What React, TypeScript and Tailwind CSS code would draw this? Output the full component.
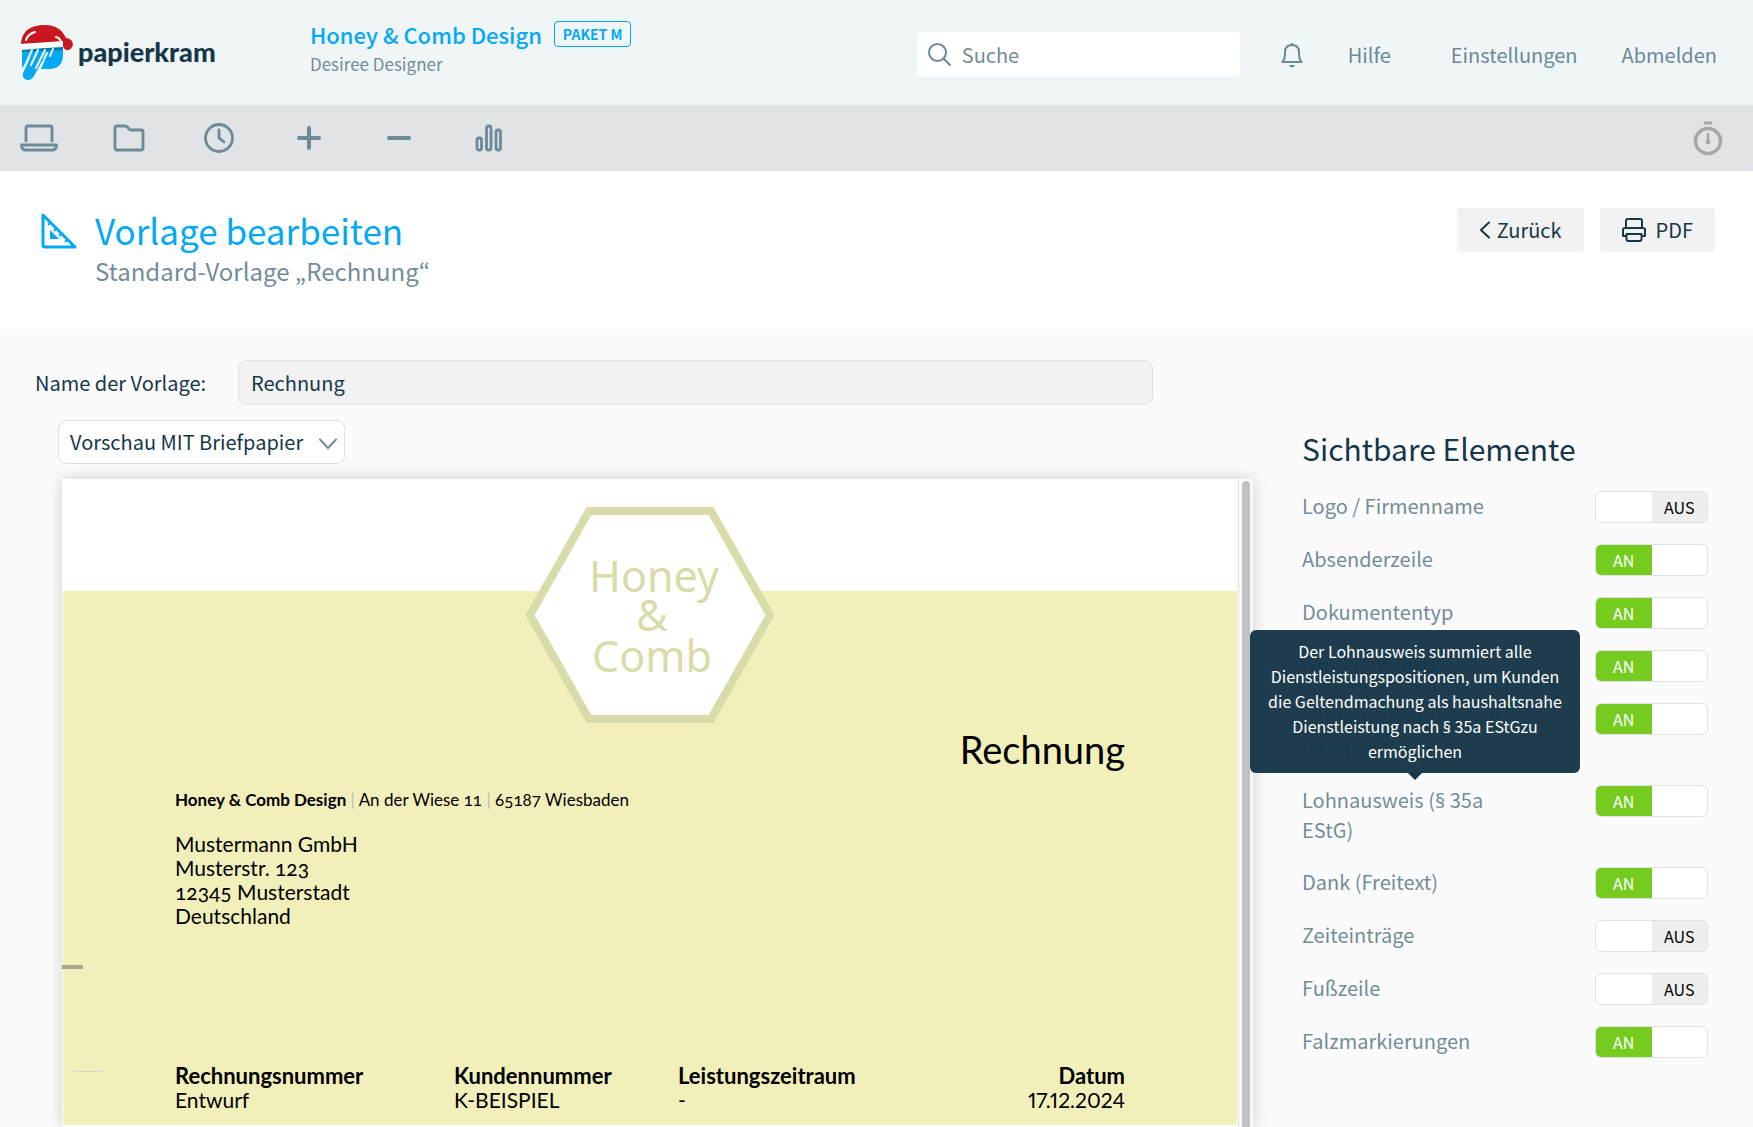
import { useState } from "react";

const NAV_LINKS = ["Hilfe", "Einstellungen", "Abmelden"];

interface VisibleElement {
  id: string;
  label: string;
  on: boolean;
  tooltip?: string;
}

const ELEMENTS: VisibleElement[] = [
  { id: "logo", label: "Logo / Firmenname", on: false },
  { id: "sender", label: "Absenderzeile", on: true },
  { id: "doctype", label: "Dokumententyp", on: true },
  { id: "greeting", label: "Gruß (Freitext)", on: true },
  { id: "terms", label: "Zahlungskonditionen (Freitext)", on: true },
  {
    id: "wage",
    label: "Lohnausweis (§ 35a EStG)",
    on: true,
    tooltip:
      "Der Lohnausweis summiert alle Dienstleistungspositionen, um Kunden die Geltendmachung als haushaltsnahe Dienstleistung nach § 35a EStGzu ermöglichen",
  },
  { id: "thanks", label: "Dank (Freitext)", on: true },
  { id: "times", label: "Zeiteinträge", on: false },
  { id: "footer", label: "Fußzeile", on: false },
  { id: "folds", label: "Falzmarkierungen", on: true },
];

// the CJK family draws "§" full width, so it is set in Noto Sans
function Text({ children }: { children: string }) {
  return children.split("§").map((part, i) => (
    <span key={i}>
      {i > 0 && <span className="font-['Noto_Sans',sans-serif] leading-none">§</span>}
      {part}
    </span>
  ));
}

function Logo() {
  return (
    <a href="#" aria-label="papierkram" className="flex items-center gap-1">
      <svg width="54" height="58" viewBox="0 0 54 58" fill="none">
        <path d="M2 24H43V31Q43 46 29 46H21L25 37Q22 37 21 40L14 53Q10 59 5 56Q1 53 4 48L11 33L2 45Z" fill="#03a9f4" />
        <path d="M2 25L43 23V27L2 29Z" fill="#0279ad" />
        <path
          d="M12 27L4 45M18 27L11 42M25 27L19 39L16 45M27 30L24 36M33 26L30 33"
          stroke="#f0f5f8"
          strokeWidth="2"
          strokeLinecap="round"
        />
        <path d="M1 21Q2 2 25 2Q40 2 46 15Q53 16 53 22Q51 28 46 27Q42 25 43 19Z" fill="#c8171e" />
        <path d="M1 21L43 18V24Q22 25 1 27Z" fill="#fff" />
        <path d="M6 17Q8 11 15 9M36 14Q40 15 41 19" stroke="#fff" strokeWidth="2" strokeLinecap="round" />
      </svg>
      <span className="font-[Lato,sans-serif] text-[27px] leading-8 font-black text-[#163748]">papierkram</span>
    </a>
  );
}

function ToolIcon({ children }: { children: React.ReactNode }) {
  return (
    <svg
      width="40"
      height="40"
      viewBox="0 0 40 40"
      fill="none"
      stroke="currentColor"
      strokeWidth="2.800"
      strokeLinecap="round"
      strokeLinejoin="round"
    >
      {children}
    </svg>
  );
}

const TOOLS = [
  {
    name: "Übersicht",
    icon: <path d="M6 23V10Q6 8 8 8H30Q32 8 32 10V23M1.500 27H36.500V28Q36 32 32 32H6Q2 32 1.500 28Z" />,
  },
  {
    name: "Projekte",
    icon: <path d="M5 10Q5 8 7 8H15Q17 8 19 11Q20 12 21 12H31Q33 12 33 14V30Q33 32 31 32H7Q5 32 5 30Z" />,
  },
  {
    name: "Zeiterfassung",
    icon: (
      <>
        <circle cx="19" cy="20" r="13.500" />
        <path d="M19 12V20L24 24" />
      </>
    ),
  },
  { name: "Einnahmen", icon: <path strokeWidth="4" d="M19 10V30M9 20H29" /> },
  { name: "Ausgaben", icon: <path strokeWidth="4" d="M9 20H29" /> },
  {
    name: "Auswertung",
    icon: (
      <>
        <rect x="7" y="20" width="4.500" height="12" rx="2" />
        <rect x="16.500" y="8" width="4.500" height="24" rx="2" />
        <rect x="26" y="12" width="4.500" height="20" rx="2" />
      </>
    ),
  },
];

function Switch({ id, on, onChange }: { id: string; on: boolean; onChange: () => void }) {
  return (
    <span className="relative -mb-px flex h-8 w-[113px] shrink-0 overflow-hidden rounded-md border border-[#dee2e6] bg-white text-base leading-[30px]">
      <input
        id={id}
        type="checkbox"
        checked={on}
        onChange={onChange}
        className="absolute inset-0 size-full cursor-pointer opacity-0"
      />
      {on ? (
        <span className="w-1/2 bg-[#76cc1e] text-center text-white">AN</span>
      ) : (
        <span className="ml-auto w-1/2 bg-[#eeeeee] text-center text-black">AUS</span>
      )}
    </span>
  );
}

function Header() {
  return (
    <header className="flex h-[105px] items-center bg-[#f0f5f8] pt-1 pr-9 pl-5">
      <div className="w-[290px] pb-1.5">
        <Logo />
      </div>
      <div className="flex flex-1 flex-col pb-3.5">
        <div className="flex items-center gap-3">
          <a href="#" className="text-[22px] leading-8 font-medium text-[#03a9f4]">
            Honey &amp; Comb Design
          </a>
          <span className="rounded border border-[#03a9f4] px-2 text-sm leading-6 font-bold text-[#03a9f4]">
            PAKET M
          </span>
        </div>
        <span className="text-[17px] leading-7 text-[#728d98]">Desiree Designer</span>
      </div>
      <label className="flex h-[45px] w-[323px] items-center gap-2.5 rounded bg-white px-2.5">
        <svg
          className="shrink-0"
          width="25"
          height="25"
          viewBox="0 0 25 25"
          fill="none"
          stroke="#6d8a96"
          strokeWidth="2"
          strokeLinecap="round"
        >
          <circle cx="10.500" cy="10.500" r="8.500" />
          <path d="M17 17L23 23" />
        </svg>
        <input
          type="search"
          aria-label="Suche"
          placeholder="Suche"
          className="w-full text-xl outline-none placeholder:text-[#728d98]"
        />
      </label>
      <nav className="ml-10 flex items-center gap-11 text-xl text-[#6d8a96]">
        <button aria-label="Benachrichtigungen">
          <svg width="24" height="26" viewBox="0 0 24 26" fill="none" stroke="currentColor" strokeWidth="2" strokeLinejoin="round">
            <path d="M12 1V3M2.500 20H21.500Q19 17 19 13V10Q19 3 12 3Q5 3 5 10V13Q5 17 2.500 20Z" />
            <path d="M9 23H15Q14 25.500 12 25.500Q10 25.500 9 23Z" fill="currentColor" stroke="none" />
          </svg>
        </button>
        {NAV_LINKS.map(link => (
          <a key={link} href="#" className="first-of-type:mr-4">
            {link}
          </a>
        ))}
      </nav>
    </header>
  );
}

function Toolbar() {
  return (
    <nav className="flex h-[66px] items-center bg-[#e0e4e7] pr-7 pl-5 text-[#6d8a96]">
      <div className="flex flex-1 gap-[50px]">
        {TOOLS.map(tool => (
          <button key={tool.name} aria-label={tool.name}>
            <ToolIcon>{tool.icon}</ToolIcon>
          </button>
        ))}
      </div>
      <button aria-label="Stoppuhr" className="text-[#a5a8a9]">
        <svg width="34" height="36" viewBox="0 0 34 36" fill="none" stroke="currentColor" strokeWidth="3.500">
          <circle cx="17" cy="21" r="12.500" />
          <path d="M13 3H21" strokeWidth="3" />
          <path d="M17 14V22" strokeWidth="2.500" strokeLinecap="round" />
          <circle cx="17" cy="22" r="2.300" fill="currentColor" stroke="none" />
        </svg>
      </button>
    </nav>
  );
}

function Preview() {
  return (
    <div className="flex h-[648px] bg-white shadow-[0_0_16px_rgba(0,0,0,0.18)]">
      <div className="relative flex-1 overflow-hidden border-r border-[#dee2e6] font-[Lato,sans-serif] text-black oldstyle-nums">
        <div className="mx-px mt-28 h-[534px] bg-[#f1f0bb] px-28 pt-[136px]">
          <h2 className="text-right text-[38px] leading-[44px]">Rechnung</h2>
          <p className="mt-[17px] text-[17px] leading-6">
            <b>Honey &amp; Comb Design</b> <span className="text-[#bbbbbb]">|</span> An der Wiese 11{" "}
            <span className="text-[#bbbbbb]">|</span> 65187 Wiesbaden
          </p>
          <address className="mt-5 text-[21px] leading-6 not-italic">
            Mustermann GmbH
            <br />
            Musterstr. 123
            <br />
            12345 Musterstadt
            <br />
            Deutschland
          </address>
          <table className="mt-[136px] w-full table-fixed text-left text-[21px] leading-6">
            <thead className="text-[22px]">
              <tr>
                <th className="w-[279px]">Rechnungsnummer</th>
                <th className="w-[224px]">Kundennummer</th>
                <th>Leistungszeitraum</th>
                <th className="w-[120px] text-right">Datum</th>
              </tr>
            </thead>
            <tbody>
              <tr>
                <td>Entwurf</td>
                <td>K-BEISPIEL</td>
                <td>-</td>
                <td className="text-right proportional-nums">17.12.2024</td>
              </tr>
            </tbody>
          </table>
        </div>

        {/* Briefpapier logo */}
        <svg className="absolute top-7 left-1/2 -translate-x-1/2" width="250" height="218" viewBox="0 0 250 218">
          <path d="M64 4H186L245 108L186 212H64L5 108Z" fill="#fff" stroke="#d9dba8" strokeWidth="8" />
          <g fill="#d9dba8" textAnchor="middle" fontFamily="Noto Sans, sans-serif" fontSize="43">
            <text x="129" y="85">Honey</text>
            <text x="127" y="124">&amp;</text>
            <text x="127" y="165">Comb</text>
          </g>
        </svg>

        {/* fold marks */}
        <div className="absolute top-[486px] left-0 h-1 w-[21px] bg-[#a9a88d]" />
        <div className="absolute top-[592px] left-3 h-px w-7 bg-[#d8d8c8]" />
      </div>
      <div className="w-3.5 bg-[#fafafa] px-[3px] pt-0.5">
        <div className="h-full w-2 rounded-t-full bg-[#c1c1c1]" />
      </div>
    </div>
  );
}

export default function App() {
  const [elements, setElements] = useState(ELEMENTS);

  const toggle = (id: string) =>
    setElements(elements.map(el => (el.id === id ? { ...el, on: !el.on } : el)));

  return (
    <div className="h-screen overflow-hidden bg-[#fbfbfb] font-['Noto_Sans_CJK_KR',sans-serif] text-[#163748]">
      <Header />
      <Toolbar />

      <section className="flex h-[158px] items-start bg-white pt-[37px] pr-[38px] pl-10">
        <svg className="mt-1" width="38" height="38" viewBox="0 0 38 38" fill="none" stroke="#03a9f4" strokeWidth="3" strokeLinejoin="round">
          <path d="M3 3V33Q3 35 5 35H35Z" />
          <path d="M10 18V27H19Z" fill="#03a9f4" stroke="none" />
          <path d="M10 11L8 13M16 17L14 19M21 22L19 24M27 28L25 30" strokeWidth="2" />
        </svg>
        <div className="ml-[17px] flex-1">
          <h1 className="text-[35px] leading-[44px] text-[#03a9f4]">Vorlage bearbeiten</h1>
          <p className="text-2xl leading-[38px] text-[#728d98]">Standard-Vorlage „Rechnung“</p>
        </div>
        <div className="flex gap-4 text-xl">
          <button className="flex h-11 items-center gap-1.5 rounded bg-[#f2f2f2] px-[22px]">
            <svg width="12" height="18" viewBox="0 0 12 18" fill="none" stroke="currentColor" strokeWidth="2" strokeLinecap="round">
              <path d="M10 1.500L2 9L10 16.500" />
            </svg>
            Zurück
          </button>
          <button className="flex h-11 items-center gap-2.5 rounded bg-[#f2f2f2] px-[22px]">
            <svg width="24" height="24" viewBox="0 0 24 24" fill="none" stroke="currentColor" strokeWidth="2" strokeLinejoin="round">
              <path d="M4 10V3Q4 1 6 1H18Q20 1 20 3V10M4 18H1V12Q1 10 3 10H21Q23 10 23 12V18H20" />
              <path d="M4.500 16H19.500V21Q19.500 23 17.500 23H6.500Q4.500 23 4.500 21Z" />
            </svg>
            PDF
          </button>
        </div>
      </section>

      <main className="flex items-start pt-[31px]">
        <div className="flex-1">
          <div className="flex items-center pr-[100px] pl-[35px]">
            <label htmlFor="template-name" className="w-[203px] text-xl">
              Name der Vorlage:
            </label>
            <input
              id="template-name"
              defaultValue="Rechnung"
              className="h-[45px] min-w-0 flex-1 rounded-lg border border-[#dee2e6] bg-[#f2f2f2] px-3 text-xl"
            />
          </div>
          <div className="mt-[15px] mb-[15px] ml-[58px] flex">
            <div className="relative">
              <select
                aria-label="Vorschau"
                className="h-11 w-[287px] appearance-none rounded-lg border border-[#dcdfe2] bg-white px-[11px] text-xl"
              >
                <option>Vorschau MIT Briefpapier</option>
                <option>Vorschau OHNE Briefpapier</option>
              </select>
              <svg
                className="pointer-events-none absolute top-[18px] right-2"
                width="18"
                height="12"
                viewBox="0 0 18 12"
                fill="none"
                stroke="#728d98"
                strokeWidth="2"
                strokeLinecap="round"
              >
                <path d="M1 1.500L9 10L17 1.500" />
              </svg>
            </div>
          </div>
          <div className="ml-[62px]">
            <Preview />
          </div>
        </div>

        <aside className="w-[500px] pt-16 pr-[45px] pl-[49px]">
          <h2 className="mb-[19px] text-3xl leading-[48px]">Sichtbare Elemente</h2>
          <ul className="flex flex-col gap-[22px]">
            {elements.map(el => (
              <li key={el.id} className="flex items-start justify-between">
                <label htmlFor={el.id} className="relative w-[226px] text-xl leading-[30px] text-[#728d98]">
                  <Text>{el.label}</Text>
                  {el.tooltip && (
                    <span
                      role="tooltip"
                      className="absolute bottom-full left-1/2 mb-3 w-[330px] -translate-x-1/2 rounded-md bg-[#163748]/97 px-3 py-[9px] text-center text-base leading-[25px] text-white"
                    >
                      <Text>{el.tooltip}</Text>
                      <span className="absolute top-full left-1/2 -translate-x-1/2 border-x-[7px] border-t-[7px] border-x-transparent border-t-[#163748]" />
                    </span>
                  )}
                </label>
                <Switch id={el.id} on={el.on} onChange={() => toggle(el.id)} />
              </li>
            ))}
          </ul>
        </aside>
      </main>
    </div>
  );
}
